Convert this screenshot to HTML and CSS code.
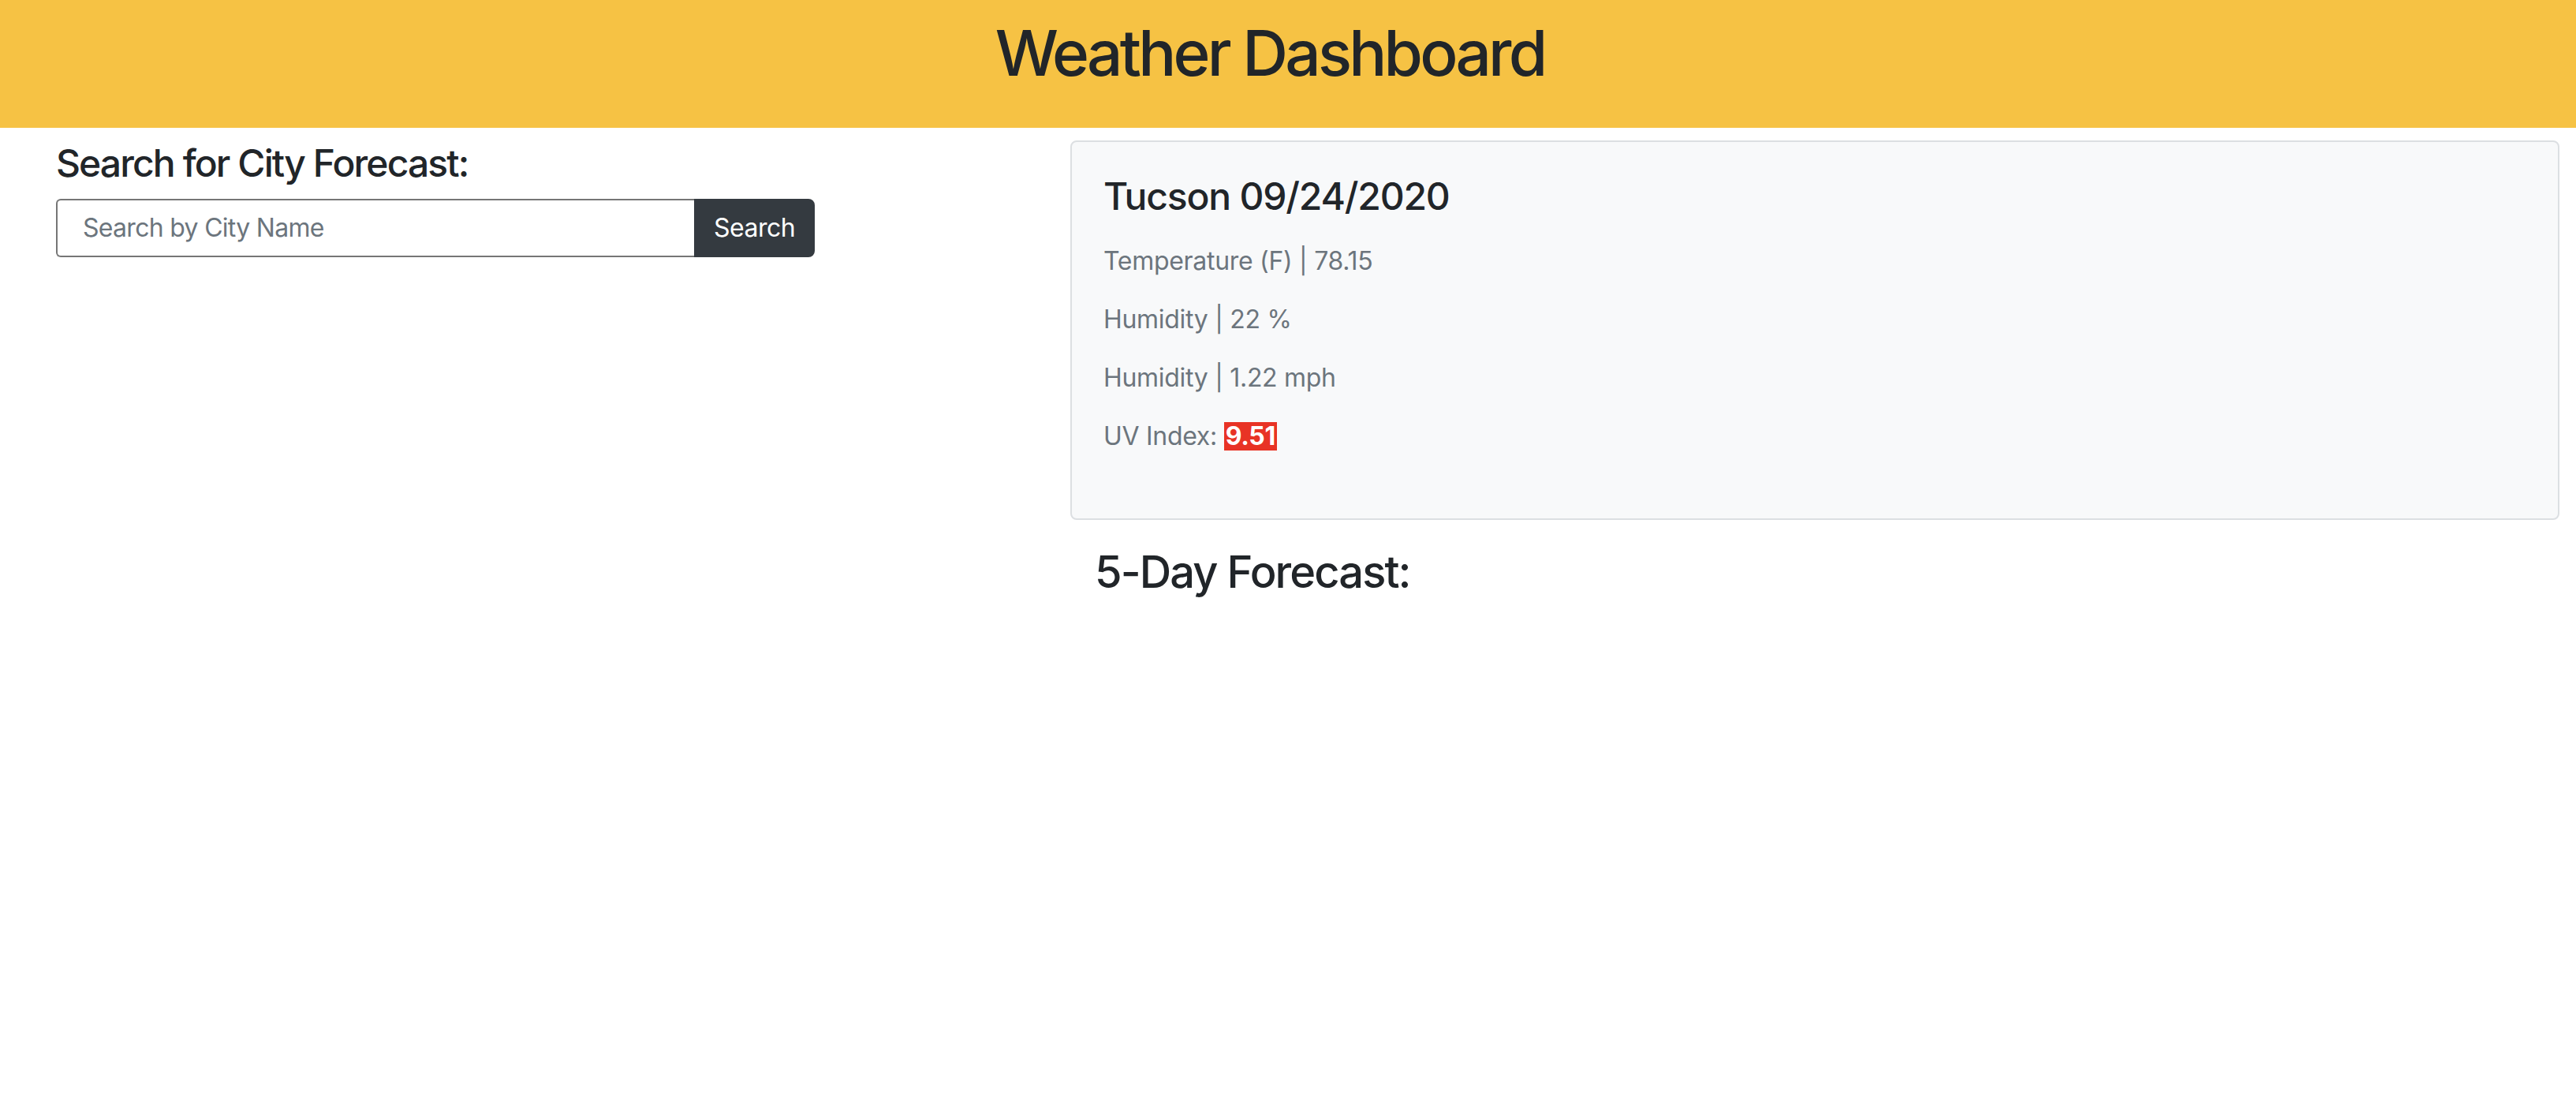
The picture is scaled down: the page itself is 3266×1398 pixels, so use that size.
FILE: index.html
```html
<!DOCTYPE html>
<html lang="en">
<head>
<meta charset="utf-8">
<title>Weather Dashboard</title>
<link rel="stylesheet" href="styles.css">
</head>
<body>
<header class="site-header">
  <h1 class="site-title">Weather Dashboard</h1>
</header>
<main class="layout">
  <section class="search-col">
    <h4 class="search-title">Search for City Forecast:</h4>
    <form class="search-group">
      <input class="search-input" type="text" placeholder="Search by City Name">
      <button class="search-btn" type="button">Search</button>
    </form>
  </section>
  <section class="weather-col">
    <div class="current-card">
      <h4 class="card-title">Tucson 09/24/2020</h4>
      <p class="card-line">Temperature (F) | 78.15</p>
      <p class="card-line">Humidity | 22 %</p>
      <p class="card-line">Humidity | 1.22 mph</p>
      <p class="card-line">UV Index: <span class="uv-badge">9.51</span></p>
    </div>
    <h3 class="forecast-title">5-Day Forecast:</h3>
  </section>
</main>
</body>
</html>
```
FILE: styles.css
```css
* { box-sizing: border-box; }

body {
  margin: 0;
  font-family: Inter, "Noto Sans", "Liberation Sans", sans-serif;
  color: #212529;
  background: #ffffff;
}

.site-header {
  background: #f6c244;
  height: 162px;
  padding: 19px 46px 0 0;
  text-align: center;
}

.site-title {
  margin: 0;
  font-size: 80px;
  font-weight: 500;
  line-height: 96px;
  letter-spacing: -3.8px;
  color: #212529;
}

.layout {
  display: flex;
  padding-top: 16px;
}

.search-col {
  width: 1357px;
  flex: none;
  padding-left: 71px;
}

.search-title {
  margin: 0 0 16px;
  font-size: 48px;
  font-weight: 500;
  line-height: 57.6px;
  letter-spacing: -1.9px;
}

.search-group {
  display: flex;
  margin: 0;
}

.search-input {
  width: 809px;
  height: 74px;
  border: 2px solid #767676;
  border-right: none;
  border-radius: 6px 0 0 6px;
  padding: 0 0 0 32px;
  font-family: inherit;
  font-size: 32px;
  letter-spacing: -0.7px;
  color: #495057;
  background: #fff;
  outline: none;
}

.search-input::placeholder {
  color: #6c757d;
}

.search-btn {
  width: 153px;
  height: 74px;
  border: 2px solid #343a40;
  border-radius: 0 8px 8px 0;
  background: #343a40;
  color: #ffffff;
  font-family: inherit;
  font-size: 32px;
  letter-spacing: -0.5px;
  padding: 0;
}

.weather-col {
  flex: 1;
  padding-right: 21px;
}

.current-card {
  background: #f8f9fa;
  border: 2px solid #dcdfe2;
  border-radius: 8px;
  padding: 40px 40px 51px;
}

.card-title {
  margin: 0 0 32px;
  font-size: 48px;
  font-weight: 500;
  line-height: 57.6px;
  letter-spacing: -1.2px;
}

.card-line {
  margin: 0 0 32px;
  font-size: 32px;
  line-height: 42px;
  letter-spacing: -0.3px;
  color: #6c757d;
}

.uv-badge {
  display: inline-block;
  background: #e83325;
  color: #ffffff;
  font-weight: 700;
  line-height: 36px;
  padding: 0 2px;
}

.forecast-title {
  margin: 33px 0 0 31px;
  font-size: 56px;
  font-weight: 500;
  line-height: 67.2px;
  letter-spacing: -1.9px;
}
```
